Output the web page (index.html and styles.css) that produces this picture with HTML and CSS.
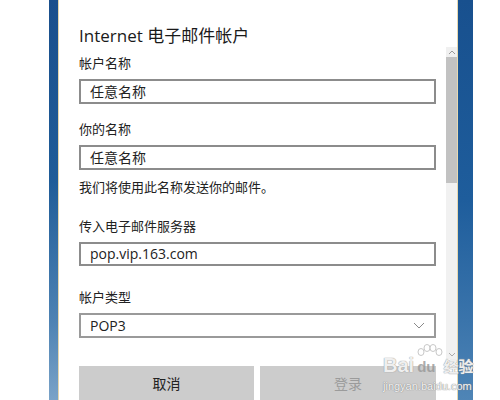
FILE: index.html
```html
<!DOCTYPE html>
<html lang="zh-CN">
<head>
<meta charset="utf-8">
<title>Internet 电子邮件帐户</title>
<link rel="stylesheet" href="styles.css">
</head>
<body>
<div class="desk">
  <div class="gap-left"></div>
  <div class="strip strip-left"></div>
  <div class="dialog">
    <div class="content">
      <h1 class="title">Internet 电子邮件帐户</h1>
      <div class="label l1">帐户名称</div>
      <div class="field">任意名称</div>
      <div class="label l2">你的名称</div>
      <div class="field">任意名称</div>
      <div class="note">我们将使用此名称发送你的邮件。</div>
      <div class="label l3">传入电子邮件服务器</div>
      <div class="field latin">pop.vip.163.com</div>
      <div class="label l4">帐户类型</div>
      <div class="field select latin">POP3
        <svg class="chev" width="12" height="7" viewBox="0 0 12 7"><path d="M1 1 L6 6 L11 1" fill="none" stroke="#8a8a8a" stroke-width="1"/></svg>
      </div>
      <div class="buttons">
        <div class="btn">取消</div>
        <div class="btn disabled">登录</div>
      </div>
    </div>
    <div class="scrollbar">
      <div class="arrow up"><svg width="8" height="5" viewBox="0 0 8 5"><path d="M1 4 L4 1 L7 4" fill="none" stroke="#999" stroke-width="1"/></svg></div>
      <div class="thumb"></div>
      <div class="track"></div>
      <div class="arrow down"><svg width="8" height="5" viewBox="0 0 8 5"><path d="M1 1 L4 4 L7 1" fill="none" stroke="#aaa" stroke-width="1"/></svg></div>
    </div>
  </div>
  <div class="strip strip-right"></div>
  <div class="gap-right"></div>
  <div class="watermark">
    <svg class="paw" width="28" height="20" viewBox="0 0 28 20">
      <g fill="rgba(255,255,255,0.85)" stroke="#c8c8c8" stroke-width="1">
        <ellipse cx="5" cy="8" rx="3" ry="3.5"/>
        <ellipse cx="11" cy="4" rx="3" ry="3.5"/>
        <ellipse cx="17" cy="4" rx="3" ry="3.5"/>
        <ellipse cx="23" cy="8" rx="3" ry="3.5"/>
      </g>
    </svg>
    <div class="wm-big"><span>Bai</span><span class="du">du</span><span class="jy">经验</span></div>
    <div class="wm-small">jingyan.baidu.com</div>
  </div>
</div>
</body>
</html>
```
FILE: styles.css
```css
html, body {
  margin: 0;
  padding: 0;
  background: #ffffff;
}
.desk {
  position: relative;
  display: flex;
  width: 500px;
  height: 400px;
  overflow: hidden;
  font-family: "Noto Sans CJK SC", "Noto Sans", sans-serif;
  color: #1f1f1f;
}
.gap-left { width: 49px; flex: none; background: #fff; }
.gap-right { flex: 1; background: #fff; }
.strip { flex: none; }
.strip-left {
  width: 9px;
  background: linear-gradient(to bottom, #1a4f8c 0%, #1f5c98 45%, #4d82b3 80%, #7aa3c8 100%);
  border-right: 1px solid #e4d6ad;
}
.strip-right {
  width: 15px;
  background: linear-gradient(to bottom, #18508e 0%, #1e5d9c 50%, #3a74ab 80%, #4f85b6 100%);
  border-left: 1px solid #e6d8b0;
}
.dialog {
  width: 398px;
  flex: none;
  display: flex;
  background: #fff;
}
.content {
  width: 357px;
  padding: 25px 10px 0 20px;
  display: flex;
  flex-direction: column;
}
.title {
  margin: 0;
  font-family: "Open Sans", "Noto Sans CJK SC", sans-serif;
  font-weight: 400;
  font-size: 17px;
  line-height: 22px;
  color: #1a1a1a;
}
.label, .note {
  font-size: 13px;
  line-height: 16px;
  color: #222;
}
.l1 { margin-top: 8px; }
.l2 { margin-top: 17px; }
.l3 { margin-top: 23px; }
.l4 { margin-top: 23px; }
.note { margin-top: 9px; }
.field {
  margin-top: 8px;
  height: 27px;
  box-sizing: border-box;
  border: 2px solid #8c8c8c;
  padding-left: 9px;
  display: flex;
  align-items: center;
  font-size: 14px;
  color: #222;
}
.latin {
  font-family: "Open Sans", "Noto Sans", sans-serif;
}
.select {
  justify-content: space-between;
  padding-right: 9px;
  border-color: #9a9a9a;
}
.chev { display: block; }
.buttons {
  margin-top: 28px;
  display: grid;
  grid-template-columns: 175px 1fr;
  gap: 6px;
}
.btn {
  height: 34px;
  background: #cccccc;
  display: flex;
  align-items: center;
  justify-content: center;
  font-size: 14px;
  color: #222;
}
.btn.disabled { color: #9b9b9b; }
.scrollbar {
  margin-top: 47px;
  width: 11px;
  height: 312px;
  display: flex;
  flex-direction: column;
  background: #f1f1f1;
}
.arrow {
  height: 10px;
  display: flex;
  align-items: center;
  justify-content: center;
  flex: none;
}
.arrow.up { background: #f0f0f0; }
.thumb {
  height: 126px;
  background: #c2c2c2;
  flex: none;
}
.track { flex: 1; }
.watermark {
  position: absolute;
  left: 383px;
  top: 344px;
  width: 100px;
  font-family: "Liberation Sans", "Noto Sans CJK SC", sans-serif;
}
.paw {
  position: absolute;
  left: 33px;
  top: 0;
}
.wm-big {
  position: relative;
  margin-top: 12px;
  font-size: 20px;
  line-height: 18px;
  font-weight: 700;
  color: rgba(255, 255, 255, 0.85);
  text-shadow: 0 0 1px #9a9a9a, 0 0 1px #9a9a9a;
  white-space: nowrap;
}
.wm-big .du { margin-left: 3px; font-size: 15px; color: rgba(150, 150, 150, 0.8); text-shadow: none; }
.wm-big .jy { margin-left: 8px; font-size: 15px; }
.wm-small {
  position: relative;
  margin-top: 4px;
  font-size: 11px;
  line-height: 13px;
  color: rgba(255, 255, 255, 0.9);
  text-shadow: 0 0 1px #8a8a8a, 0 0 1px #8a8a8a;
  white-space: nowrap;
}
```
